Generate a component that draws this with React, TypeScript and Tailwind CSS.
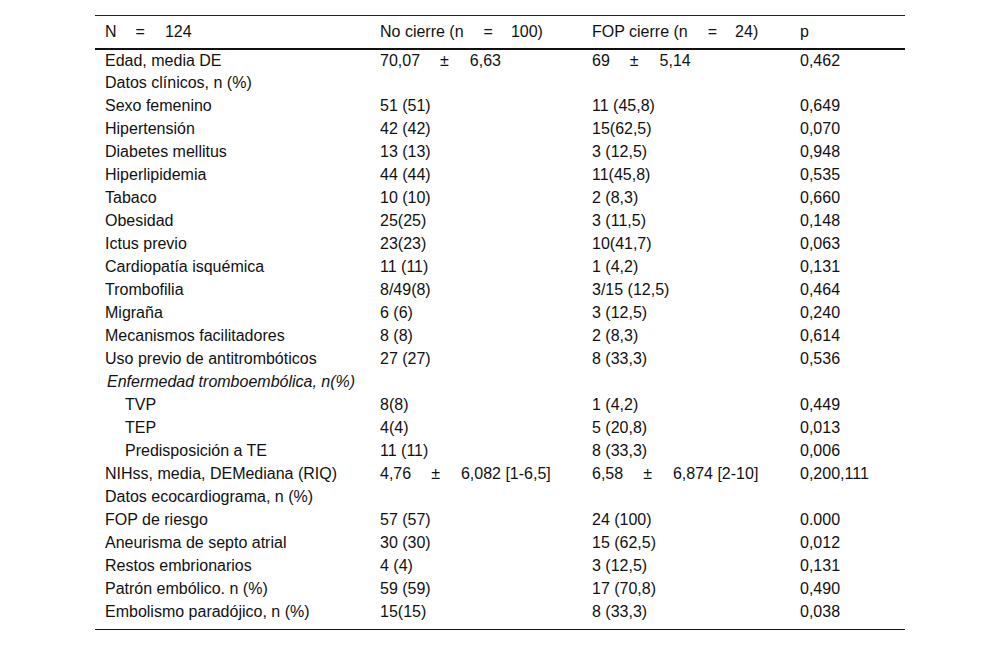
import React from 'react';

type Row = { label: React.ReactNode; a?: React.ReactNode; b?: React.ReactNode; p?: string; indent?: boolean; italic?: boolean };

const PM = ({ x, y }: { x: string; y: string }) => (
  <span className="whitespace-pre">
    {x}
    <span className="ml-[20px]">±</span>
    <span className="ml-[21px]">{y}</span>
  </span>
);

const rows: Row[] = [
  { label: 'Edad, media DE', a: <PM x="70,07" y="6,63" />, b: <PM x="69" y="5,14" />, p: '0,462' },
  { label: 'Datos clínicos, n (%)' },
  { label: 'Sexo femenino', a: '51 (51)', b: '11 (45,8)', p: '0,649' },
  { label: 'Hipertensión', a: '42 (42)', b: '15(62,5)', p: '0,070' },
  { label: 'Diabetes mellitus', a: '13 (13)', b: '3 (12,5)', p: '0,948' },
  { label: 'Hiperlipidemia', a: '44 (44)', b: '11(45,8)', p: '0,535' },
  { label: 'Tabaco', a: '10 (10)', b: '2 (8,3)', p: '0,660' },
  { label: 'Obesidad', a: '25(25)', b: '3 (11,5)', p: '0,148' },
  { label: 'Ictus previo', a: '23(23)', b: '10(41,7)', p: '0,063' },
  { label: 'Cardiopatía isquémica', a: '11 (11)', b: '1 (4,2)', p: '0,131' },
  { label: 'Trombofilia', a: '8/49(8)', b: '3/15 (12,5)', p: '0,464' },
  { label: 'Migraña', a: '6 (6)', b: '3 (12,5)', p: '0,240' },
  { label: 'Mecanismos facilitadores', a: '8 (8)', b: '2 (8,3)', p: '0,614' },
  { label: 'Uso previo de antitrombóticos', a: '27 (27)', b: '8 (33,3)', p: '0,536' },
  { label: 'Enfermedad tromboembólica, n(%)', italic: true },
  { label: 'TVP', a: '8(8)', b: '1 (4,2)', p: '0,449', indent: true },
  { label: 'TEP', a: '4(4)', b: '5 (20,8)', p: '0,013', indent: true },
  { label: 'Predisposición a TE', a: '11 (11)', b: '8 (33,3)', p: '0,006', indent: true },
  { label: 'NIHss, media, DEMediana (RIQ)', a: <PM x="4,76" y="6,082 [1-6,5]" />, b: <PM x="6,58" y="6,874 [2-10]" />, p: '0,200,111' },
  { label: 'Datos ecocardiograma, n (%)' },
  { label: 'FOP de riesgo', a: '57 (57)', b: '24 (100)', p: '0.000' },
  { label: 'Aneurisma de septo atrial', a: '30 (30)', b: '15 (62,5)', p: '0,012' },
  { label: 'Restos embrionarios', a: '4 (4)', b: '3 (12,5)', p: '0,131' },
  { label: 'Patrón embólico. n (%)', a: '59 (59)', b: '17 (70,8)', p: '0,490' },
  { label: 'Embolismo paradójico, n (%)', a: '15(15)', b: '8 (33,3)', p: '0,038' },
];

const Eq = ({ pre, n }: { pre: string; n: string }) => (
  <span className="whitespace-pre">
    {pre}
    <span className="ml-[20px]">=</span>
    <span className="ml-[18px]">{n}</span>
  </span>
);

export default function App() {
  const last = rows.length - 1;
  return (
    <div className="w-[1000px] h-[645px] bg-white pt-[15px] text-[16px] leading-[20px] text-[#111] font-['Liberation_Sans',Arial,sans-serif]">
      <table className="ml-[95px] w-[810px] border-collapse">
        <colgroup>
          <col className="w-[275px]" />
          <col className="w-[212px]" />
          <col className="w-[208px]" />
          <col className="w-[115px]" />
        </colgroup>
        <thead>
          <tr className="border-t border-[#222] border-b-2 border-b-[#111]">
            <th className="h-[33px] pl-[10px] text-left font-normal">
              <span className="whitespace-pre">N<span className="ml-[19px]">=</span><span className="ml-[20px]">124</span></span>
            </th>
            <th className="pl-[10px] text-left font-normal"><Eq pre="No cierre (n" n="100)" /></th>
            <th className="pl-[10px] text-left font-normal"><Eq pre="FOP cierre (n" n="24)" /></th>
            <th className="pl-[10px] text-left font-normal">p</th>
          </tr>
        </thead>
        <tbody>
          {rows.map((r, i) => (
            <tr key={i} className={i === last ? 'border-b-[1.5px] border-[#111]' : ''}>
              <td className={`${i === last ? 'h-[29px] pb-[6px]' : 'h-[23px]'} ${r.indent ? 'pl-[30px]' : r.italic ? 'pl-[12px]' : 'pl-[10px]'} ${r.italic ? 'italic' : ''}`}>
                {r.label}
              </td>
              <td className={`pl-[10px] ${i === last ? 'pb-[6px]' : ''}`}>{r.a}</td>
              <td className={`pl-[10px] ${i === last ? 'pb-[6px]' : ''}`}>{r.b}</td>
              <td className={`pl-[10px] ${i === last ? 'pb-[6px]' : ''}`}>{r.p}</td>
            </tr>
          ))}
        </tbody>
      </table>
    </div>
  );
}
